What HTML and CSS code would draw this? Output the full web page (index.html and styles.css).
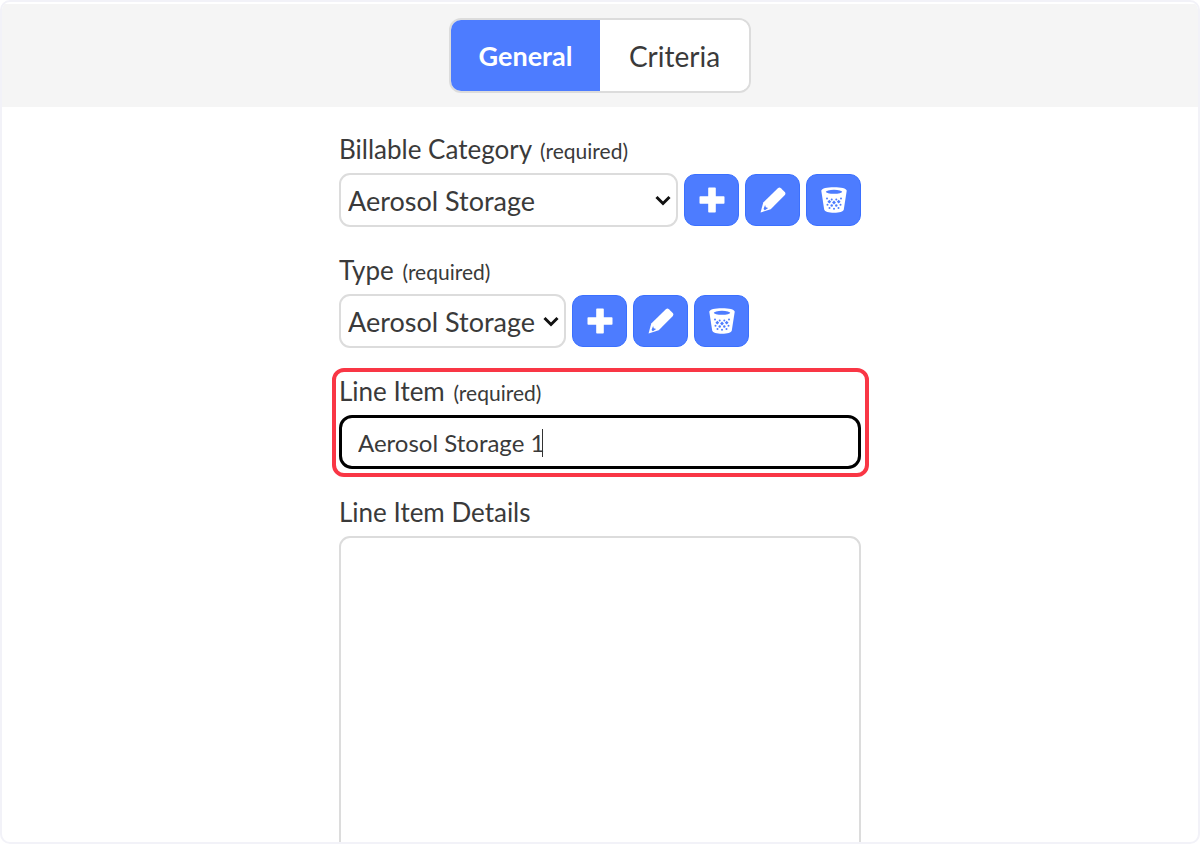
FILE: index.html
```html
<!DOCTYPE html>
<html lang="en">
<head>
<meta charset="utf-8">
<meta name="viewport" content="width=device-width, initial-scale=1">
<title>Billable line item</title>
<link rel="stylesheet" href="styles.css">
</head>
<body>
<svg class="sprite" aria-hidden="true">
  <symbol id="plus" viewBox="0 0 26 26"><path d="M10 0.5h6a.8.8 0 0 1 .8.8v7.900h7.900a.8.8 0 0 1 .8.8v6a.8.8 0 0 1-.8.8h-7.900v7.900a.8.8 0 0 1-.8.8h-6a.8.8 0 0 1-.8-.8v-7.900H1.300a.8.8 0 0 1-.8-.8v-6a.8.8 0 0 1 .8-.8h7.900V1.300a.8.8 0 0 1 .8-.8z" fill="#fff"/></symbol>
  <symbol id="pencil" viewBox="0 0 28 28"><path d="M19.500 1.200q1.600-1.200 3 .1l4.200 4.200q1.300 1.400.1 3L11.500 24 .6 27.500 3.500 16.700z" fill="#fff"/><path d="M5.500 19.300l.7 2.500 2.600.8-3.600 2.400-1.400-1.200z" fill="#4d7cff"/></symbol>
  <symbol id="trash" viewBox="0 0 26 26">
    <path d="M0.300 3.800C.5 1.300 6 .3 13 .3s12.500 1 12.700 3.500L22.800 22.500c-.6 2.300-4.400 3.200-9.800 3.200s-9.200-.9-9.800-3.200z" fill="#fff"/>
    <ellipse cx="13" cy="4.800" rx="8.200" ry="2" fill="#4d7cff"/>
    <g fill="#4d7cff">
      <circle cx="6" cy="11.500" r="1"/><circle cx="10.700" cy="12.500" r="1"/><circle cx="15.300" cy="12.500" r="1"/><circle cx="20" cy="11.500" r="1"/>
      <path d="M8.300 12.800l1.900 1.900-1.900 1.900-1.900-1.900zM13 13.600l1.900 1.900-1.900 1.900-1.900-1.900zM17.700 12.800l1.900 1.900-1.900 1.900-1.900-1.900z"/>
      <circle cx="6.500" cy="17.700" r="1"/><circle cx="10.700" cy="18.500" r="1.200"/><circle cx="15.300" cy="18.500" r="1.200"/><circle cx="19.500" cy="17.700" r="1"/>
      <circle cx="8.500" cy="21" r="1"/><circle cx="13" cy="21.700" r="1"/><circle cx="17.500" cy="21" r="1"/>
    </g>
  </symbol>
  <symbol id="chevron" viewBox="0 0 16 11"><path d="M1.500 2l6.500 6.500L14.500 2" fill="none" stroke="#111" stroke-width="3"/></symbol>
</svg>
<div class="frame">
  <header class="toolbar">
    <nav class="tabs" aria-label="Sections">
      <button type="button" class="tab tab-active" aria-pressed="true">General</button>
      <button type="button" class="tab" aria-pressed="false">Criteria</button>
    </nav>
  </header>
  <form class="form">
    <div class="field">
      <label class="label" for="category">Billable Category <small class="required">(required)</small></label>
      <div class="row">
        <div class="select-wrap select-wide">
          <select class="control select" id="category"><option>Aerosol Storage</option></select>
          <svg class="chevron" aria-hidden="true"><use href="#chevron"/></svg>
        </div>
        <button type="button" class="action" aria-label="Add category"><svg class="icon"><use href="#plus"/></svg></button>
        <button type="button" class="action" aria-label="Edit category"><svg class="icon"><use href="#pencil"/></svg></button>
        <button type="button" class="action" aria-label="Delete category"><svg class="icon"><use href="#trash"/></svg></button>
      </div>
    </div>
    <div class="field">
      <label class="label" for="type">Type <small class="required">(required)</small></label>
      <div class="row">
        <div class="select-wrap">
          <select class="control select" id="type"><option>Aerosol Storage</option></select>
          <svg class="chevron" aria-hidden="true"><use href="#chevron"/></svg>
        </div>
        <button type="button" class="action" aria-label="Add type"><svg class="icon"><use href="#plus"/></svg></button>
        <button type="button" class="action" aria-label="Edit type"><svg class="icon"><use href="#pencil"/></svg></button>
        <button type="button" class="action" aria-label="Delete type"><svg class="icon"><use href="#trash"/></svg></button>
      </div>
    </div>
    <div class="field field-highlight">
      <label class="label" for="item">Line Item <small class="required">(required)</small></label>
      <div class="input-wrap">
        <input class="control input" id="item" type="text" value="Aerosol Storage 1">
        <span class="caret"></span>
      </div>
    </div>
    <div class="field">
      <label class="label" for="details">Line Item Details</label>
      <textarea class="control textarea" id="details"></textarea>
    </div>
  </form>
</div>
</body>
</html>
```
FILE: styles.css
```css
* { box-sizing: border-box; }

body {
  margin: 0;
  background: #fff;
  color: #3a3a3a;
  font-family: Lato, "Open Sans", sans-serif;
  font-size: 26px;
}

button, select, input, textarea { font: inherit; color: inherit; }

.sprite { position: absolute; width: 0; height: 0; }

.frame {
  height: 100vh;
  overflow: hidden;
  padding-top: 2px;
  border: 2px solid #f2f2f8;
  border-radius: 10px;
}

.toolbar {
  display: flex;
  justify-content: center;
  padding: 14px;
  background: #f5f5f5;
}

.tabs {
  display: flex;
  height: 75px;
  border: 2px solid #dcdcdc;
  border-radius: 12px;
  background: #fff;
  overflow: hidden;
}

.tab {
  width: 149px;
  padding: 0;
  border: 0;
  background: #fff;
  font-size: 28px;
}

.tab-active {
  background: #4d7cff;
  color: #fff;
  font-size: 27px;
  font-weight: 700;
}

.form {
  display: flex;
  flex-direction: column;
  gap: 27px;
  max-width: 522px;
  margin: 0 auto;
  padding-top: 26px;
}

.field {
  position: relative;
  display: flex;
  flex-direction: column;
  gap: 7px;
}

.label { line-height: 33px; }

.required {
  margin-left: 2px;
  font-size: 21px;
  line-height: 1;
}

.row {
  display: flex;
  align-items: center;
  gap: 6px;
}

.select-wrap {
  position: relative;
  width: 227px;
}

.select-wide { flex: 1; }

.control {
  display: block;
  width: 100%;
  height: 54px;
  border: 2px solid #dcdcdc;
  border-radius: 11px;
  outline: 0;
  background: #fff;
}

.select {
  appearance: none;
  padding: 0 7px;
  font-size: 27px;
}

.chevron {
  position: absolute;
  top: 22px;
  right: 7px;
  width: 16px;
  height: 11px;
  pointer-events: none;
}

.action {
  display: flex;
  flex: none;
  align-items: center;
  justify-content: center;
  width: 55px;
  height: 52px;
  padding: 0;
  border: 1px solid #3b70ff;
  border-radius: 11px;
  background: #4d7cff;
}

.icon { width: 26px; height: 26px; }

.field-highlight::after {
  content: "";
  position: absolute;
  inset: -7px -8px -8px -7px;
  border: 4px solid #f93645;
  border-radius: 12px;
  pointer-events: none;
}

.input-wrap { position: relative; }

.input {
  padding: 0 16px;
  border: 3px solid #000;
  border-radius: 13px;
  font-size: 24px;
}

.caret {
  position: absolute;
  top: 14px;
  left: 203px;
  width: 1px;
  height: 28px;
  background: #333;
}

.textarea {
  height: 400px;
  padding: 12px 16px;
  resize: none;
}
```
